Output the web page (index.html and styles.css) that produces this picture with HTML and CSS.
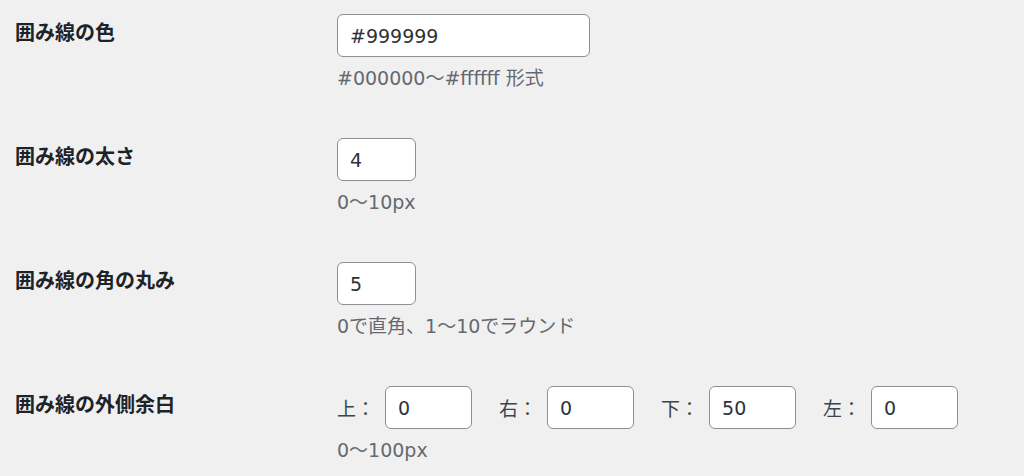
FILE: index.html
```html
<!DOCTYPE html>
<html lang="ja">
<head>
<meta charset="utf-8">
<title>囲み線の設定</title>
<link rel="stylesheet" href="styles.css">
</head>
<body>
<div class="form">
  <div class="row">
    <div class="label">囲み線の色</div>
    <div class="field">
      <input class="input input-regular" type="text" value="#999999">
      <p class="desc">#000000〜#ffffff 形式</p>
    </div>
  </div>
  <div class="row">
    <div class="label">囲み線の太さ</div>
    <div class="field">
      <input class="input input-small" type="text" value="4">
      <p class="desc">0〜10px</p>
    </div>
  </div>
  <div class="row">
    <div class="label">囲み線の角の丸み</div>
    <div class="field">
      <input class="input input-small" type="text" value="5">
      <p class="desc">0で直角、1〜10でラウンド</p>
    </div>
  </div>
  <div class="row">
    <div class="label">囲み線の外側余白</div>
    <div class="field">
      <div class="sides">
        <label class="side"><span class="side-name">上：</span><input class="input input-side" type="text" value="0"></label>
        <label class="side"><span class="side-name">右：</span><input class="input input-side" type="text" value="0"></label>
        <label class="side"><span class="side-name">下：</span><input class="input input-side" type="text" value="50"></label>
        <label class="side"><span class="side-name">左：</span><input class="input input-side" type="text" value="0"></label>
      </div>
      <p class="desc">0〜100px</p>
    </div>
  </div>
</div>
</body>
</html>
```

FILE: styles.css
```css
html, body {
  margin: 0;
  padding: 0;
  background: #f0f0f1;
}

body {
  font-family: "DejaVu Sans", "Noto Sans CJK JP", sans-serif;
  color: #3c434a;
  padding-left: 15px;
}

.form {
  display: flex;
  flex-direction: column;
}

.row {
  display: grid;
  grid-template-columns: 322px 1fr;
  height: 124px;
  box-sizing: border-box;
  padding-top: 14px;
}

.label {
  padding-top: 3px;
  font-family: "Noto Sans CJK JP", sans-serif;
  font-size: 20px;
  line-height: 30px;
  font-weight: 700;
  color: #1d2327;
}

.field {
  display: flex;
  flex-direction: column;
  align-items: flex-start;
}

.input {
  box-sizing: border-box;
  height: 43px;
  margin: 0;
  padding: 0 12px;
  border: 1px solid #8c8f94;
  border-radius: 6px;
  background: #fff;
  font-family: "DejaVu Sans", "Noto Sans CJK JP", sans-serif;
  font-size: 19px;
  color: #2c3338;
  outline: none;
}

.input-regular {
  width: 253px;
}

.input-small {
  width: 79px;
}

.input-side {
  width: 87px;
}

.desc {
  margin: 7px 0 0;
  font-size: 19px;
  line-height: 28px;
  color: #646970;
}

.sides {
  display: flex;
  gap: 27px;
}

.side {
  display: flex;
  align-items: center;
  gap: 10px;
}

.side-name {
  font-family: "Noto Sans CJK JP", sans-serif;
  font-size: 19px;
  color: #3c434a;
  white-space: nowrap;
}
```
